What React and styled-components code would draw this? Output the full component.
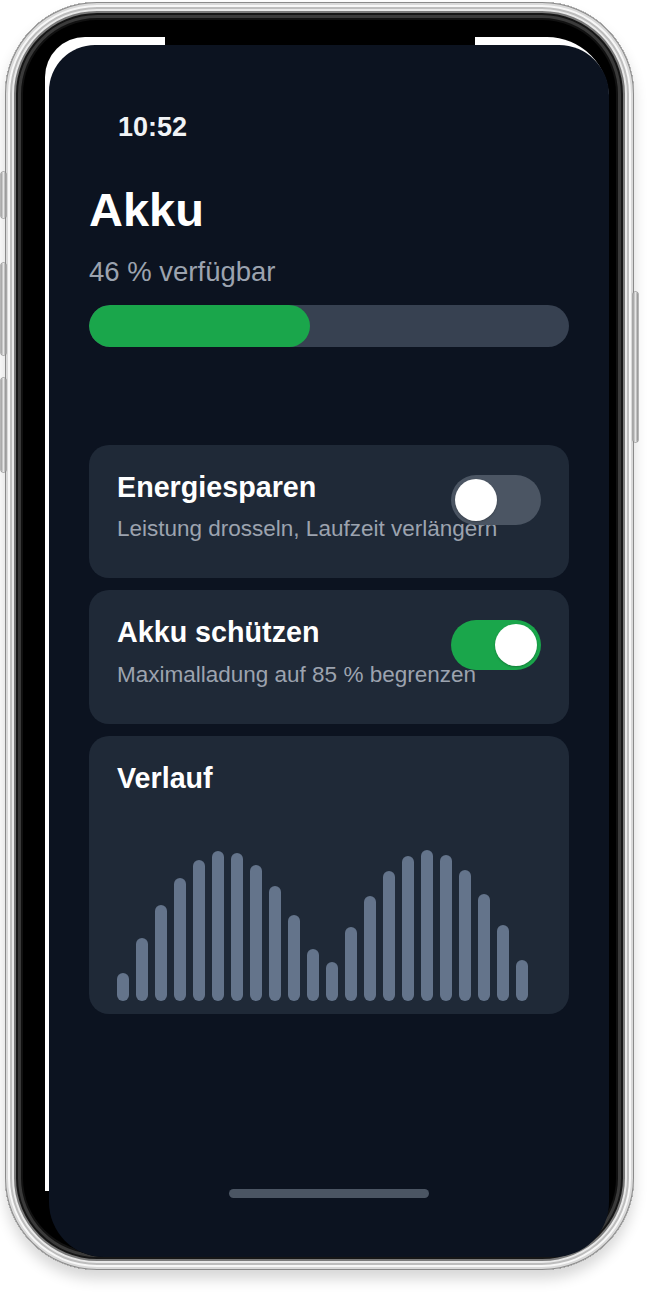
import React from 'react';
import styled, { createGlobalStyle } from 'styled-components';

const GlobalStyle = createGlobalStyle`
  html, body { margin: 0; padding: 0; background: #ffffff; }
  body { font-family: "Liberation Sans", Arial, Helvetica, sans-serif; }
  *, *::before, *::after { box-sizing: border-box; }
`;

const Page = styled.div`
  width: 658px;
  height: 1300px;
  padding: 2px 0 0 5px;
  background: #ffffff;
  overflow: hidden;
`;

const Phone = styled.div`
  position: relative;
  width: 629px;
  height: 1268px;
  border-radius: 92px;
  background: #000;
  padding: 35px 25px 13px 40px;
  display: flex;
  box-shadow:
    inset 0 0 0 1px #8a8a8a,
    inset 0 0 0 3px #d9d9d9,
    inset 0 0 0 5px #f7f7f7,
    inset 0 0 0 7px #bdbdbd,
    inset 0 0 0 9px #e9e9e9,
    inset 0 0 0 11px #7a7a7a,
    inset 0 0 0 13px #161616,
    inset 0 0 0 16px #3a3a3a,
    inset 0 0 0 18px #111111,
    0 9px 14px rgba(0, 0, 0, 0.16);
`;

const SideButton = styled.div`
  position: absolute;
  top: ${(p) => p.$top}px;
  height: ${(p) => p.$height}px;
  width: 5px;
  ${(p) => (p.$right ? 'right: -4px;' : 'left: -4px;')}
  border-radius: 2px;
  background: linear-gradient(90deg, #9b9b9b, #e6e6e6 50%, #8a8a8a);
  box-shadow: 0 0 0 0.5px #777;
`;

const Screen = styled.div`
  position: relative;
  flex: 1;
  display: flex;
  flex-direction: column;
  padding: 8px 0 0 4px;
  background: linear-gradient(180deg, #ffffff calc(100% - 66px), #000000 calc(100% - 66px));
  border-radius: 40px 62px 60px 60px;
`;

const Notch = styled.div`
  position: absolute;
  top: 0;
  left: 120px;
  width: 310px;
  height: 8px;
  background: #000;
`;

const App = styled.div`
  flex: 1;
  display: flex;
  flex-direction: column;
  padding: 66px 40px 0;
  background: #0c1320;
  border-radius: 46px 50px 55px 55px;
  color: #ffffff;
`;

const StatusBar = styled.div`
  padding-left: 29px;
  font-size: 27px;
  font-weight: 700;
  line-height: 1.2;
  color: #f1f3f6;
`;

const Title = styled.h1`
  margin: 39px 0 0;
  font-size: 47px;
  font-weight: 700;
  line-height: 1.2;
  color: #ffffff;
`;

const Subtitle = styled.div`
  margin-top: 16px;
  font-size: 27.5px;
  line-height: 1.2;
  color: #9ca3af;
`;

const Track = styled.div`
  margin-top: 17px;
  height: 42px;
  border-radius: 21px;
  background: #374151;
  overflow: hidden;
`;

const Fill = styled.div`
  height: 100%;
  border-radius: 21px;
  background: #1aa64b;
`;

const CardList = styled.div`
  margin-top: 98px;
  display: flex;
  flex-direction: column;
  gap: 12px;
`;

const Card = styled.div`
  position: relative;
  padding: 25px 28px ${(p) => (p.$chart ? 13 : 36)}px;
  border-radius: 20px;
  background: #1f2937;
`;

const CardTitle = styled.div`
  font-size: 28.7px;
  font-weight: 700;
  line-height: 1.2;
  color: #ffffff;
`;

const CardText = styled.div`
  margin-top: 11px;
  font-size: 22.5px;
  line-height: 1.2;
  color: #9ca3af;
  white-space: nowrap;
`;

const Toggle = styled.div`
  position: absolute;
  top: 30px;
  right: 28px;
  width: 90px;
  height: 50px;
  border-radius: 25px;
  background: ${(p) => (p.$on ? '#1aa64b' : '#4b5563')};
`;

const Knob = styled.div`
  position: absolute;
  top: 4px;
  left: ${(p) => (p.$on ? 44 : 4)}px;
  width: 42px;
  height: 42px;
  border-radius: 50%;
  background: #ffffff;
  box-shadow: 0 1px 2px rgba(0, 0, 0, 0.25);
`;

const Chart = styled.div`
  margin-top: 55px;
  height: 151px;
  display: flex;
  align-items: flex-end;
  gap: 7px;
`;

const Bar = styled.div`
  width: 12px;
  flex: none;
  border-radius: 6px;
  background: #64748b;
`;

const Spacer = styled.div`
  flex: 1;
`;

const HomeIndicator = styled.div`
  align-self: center;
  width: 200px;
  height: 9px;
  margin-bottom: 59px;
  border-radius: 5px;
  background: #4b5563;
`;

const bars = [28, 63, 96, 123, 141, 150, 148, 136, 115, 86, 52, 39, 74, 105, 130, 145, 151, 146, 131, 107, 76, 41];

const settings = [
  { title: 'Energiesparen', text: 'Leistung drosseln, Laufzeit verlängern', on: false },
  { title: 'Akku schützen', text: 'Maximalladung auf 85 % begrenzen', on: true },
];

export default function AppRoot() {
  const level = 46;
  return (
    <Page>
      <GlobalStyle />
      <Phone>
        <SideButton $top={170} $height={46} />
        <SideButton $top={261} $height={92} />
        <SideButton $top={376} $height={94} />
        <SideButton $right $top={290} $height={150} />
        <Screen>
          <Notch />
          <App>
            <StatusBar>10:52</StatusBar>
            <Title>Akku</Title>
            <Subtitle>{level} % verfügbar</Subtitle>
            <Track>
              <Fill style={{ width: `${level}%` }} />
            </Track>
            <CardList>
              {settings.map((s) => (
                <Card key={s.title}>
                  <CardTitle>{s.title}</CardTitle>
                  <CardText>{s.text}</CardText>
                  <Toggle $on={s.on}>
                    <Knob $on={s.on} />
                  </Toggle>
                </Card>
              ))}
              <Card $chart>
                <CardTitle>Verlauf</CardTitle>
                <Chart>
                  {bars.map((h, i) => (
                    <Bar key={i} style={{ height: `${h}px` }} />
                  ))}
                </Chart>
              </Card>
            </CardList>
            <Spacer />
            <HomeIndicator />
          </App>
        </Screen>
      </Phone>
    </Page>
  );
}
